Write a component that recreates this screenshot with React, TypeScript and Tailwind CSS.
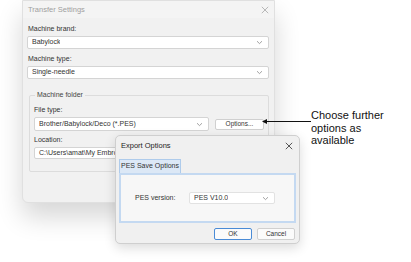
const ui = { fontFamily: '"Liberation Sans", Arial, sans-serif' };

function Chevron() {
  return (
    <svg width="7" height="5" viewBox="0 0 7 5" className="shrink-0">
      <path d="M1 1.2 L3.5 3.6 L6 1.2" fill="none" stroke="#8a8a8a" strokeWidth="0.8" />
    </svg>
  );
}

function CloseX({ color }: { color: string }) {
  return (
    <svg width="8" height="8" viewBox="0 0 8 8">
      <path d="M0.8 0.8 L7.2 7.2 M7.2 0.8 L0.8 7.2" stroke={color} strokeWidth="0.9" />
    </svg>
  );
}

function Select({ value, className }: { value: string; className: string }) {
  return (
    <div
      className={`flex items-center justify-between bg-white border border-[#d4d4d4] rounded-[2px] pl-[4px] pr-[5px] text-[7px] text-[#333] whitespace-nowrap ${className}`}
    >
      <span className="truncate">{value}</span>
      <Chevron />
    </div>
  );
}

function TransferSettings() {
  return (
    <div
      className="absolute left-[22px] top-0 w-[253px] h-[203px] bg-[#f1f1f1] border border-[#e0e0e0] rounded-b-[6px] shadow-[0_14px_26px_rgba(0,0,0,0.16)] flex flex-col"
      style={ui}
    >
      <div className="h-[17px] flex items-center justify-between pl-[5px] pr-[5px] bg-[#f4f4f4]">
        <span className="text-[7.5px] text-[#a0a0a0]">Transfer Settings</span>
        <CloseX color="#b0b0b0" />
      </div>
      <div className="flex flex-col pl-[4px] pr-[5px]">
        <span className="mt-[6px] ml-[1px] text-[7px] leading-[10px] text-[#333]">Machine brand:</span>
        <Select value="Babylock" className="mt-[2px] h-[13px]" />
        <span className="mt-[5px] ml-[1px] text-[7px] leading-[10px] text-[#333]">Machine type:</span>
        <Select value="Single-needle" className="mt-[2px] h-[13px]" />
        <div className="relative mt-[16px] ml-[2px] h-[77px] border border-[#dcdcdc] rounded-[2px] flex flex-col pl-[4px]">
          <span className="absolute -top-[6px] left-[5px] px-[2px] bg-[#f1f1f1] text-[7px] leading-[10px] text-[#444] whitespace-nowrap">
            Machine folder
          </span>
          <span className="mt-[9px] text-[7px] leading-[10px] text-[#333]">File type:</span>
          <div className="mt-[2px] flex items-center gap-[6px]">
            <Select value="Brother/Babylock/Deco (*.PES)" className="w-[175px] h-[14px]" />
            <div className="w-[49px] h-[11px] bg-white border border-[#d0d0d0] rounded-[2px] flex items-center justify-center text-[6.5px] text-[#333] whitespace-nowrap">
              Options...
            </div>
          </div>
          <span className="mt-[4px] text-[7px] leading-[10px] text-[#333]">Location:</span>
          <div className="mt-[2px] w-[200px] h-[12px] bg-white border border-[#d4d4d4] rounded-[2px] flex items-center pl-[4px] text-[7px] text-[#333] whitespace-nowrap overflow-hidden">
            C:\Users\amat\My Embroid
          </div>
        </div>
      </div>
    </div>
  );
}

function ExportOptions() {
  return (
    <div
      className="absolute left-[115px] top-[135px] w-[185px] h-[109px] bg-[#f0f0f0] border border-[#cfcfcf] rounded-[5px] shadow-[0_4px_12px_rgba(0,0,0,0.14)] flex flex-col"
      style={ui}
    >
      <div className="h-[20px] flex items-center justify-between pl-[5px] pr-[6px]">
        <span className="text-[7.5px] text-[#222]">Export Options</span>
        <CloseX color="#444" />
      </div>
      <div className="flex flex-col pl-[3px] pr-[3px]">
        <div className="mt-[3px] w-[62px] h-[14px] bg-[#dce8f6] border border-b-0 border-[#aecbeb] flex items-center justify-center text-[7px] text-[#333] whitespace-nowrap">
          PES Save Options
        </div>
        <div className="h-[50px] bg-[#f7f7f7] border-2 border-[#c4d9f1] flex items-center pl-[14px]">
          <span className="w-[54px] text-[7px] text-[#333] whitespace-nowrap">PES version:</span>
          <Select value="PES V10.0" className="w-[86px] h-[12px] border-[#e2e2e2]" />
        </div>
      </div>
      <div className="mt-[5px] flex justify-end gap-[5px] pr-[4px]">
        <div className="w-[38px] h-[12px] bg-[#fbfbfb] border border-[#4a8bd6] rounded-[2px] flex items-center justify-center text-[6.5px] text-[#333]">
          OK
        </div>
        <div className="w-[38px] h-[12px] bg-[#fbfbfb] border border-[#d0d0d0] rounded-[2px] flex items-center justify-center text-[6.5px] text-[#333]">
          Cancel
        </div>
      </div>
    </div>
  );
}

function Callout() {
  return (
    <>
      <svg className="absolute left-[262px] top-[118px]" width="50" height="7" viewBox="0 0 50 7">
        <path d="M3 3.5 L49 3.5" stroke="#111" strokeWidth="1" />
        <path d="M0 3.5 L5 1 L5 6 Z" fill="#111" />
      </svg>
      <div
        className="absolute left-[311px] top-[109px] text-[11px] leading-[12.5px] text-[#111]"
        style={{ fontFamily: '"Liberation Sans", Arial, sans-serif' }}
      >
        Choose further
        <br />
        options as
        <br />
        available
      </div>
    </>
  );
}

export default function App() {
  return (
    <div className="relative w-[411px] h-[262px] bg-white overflow-hidden">
      <TransferSettings />
      <ExportOptions />
      <Callout />
    </div>
  );
}
